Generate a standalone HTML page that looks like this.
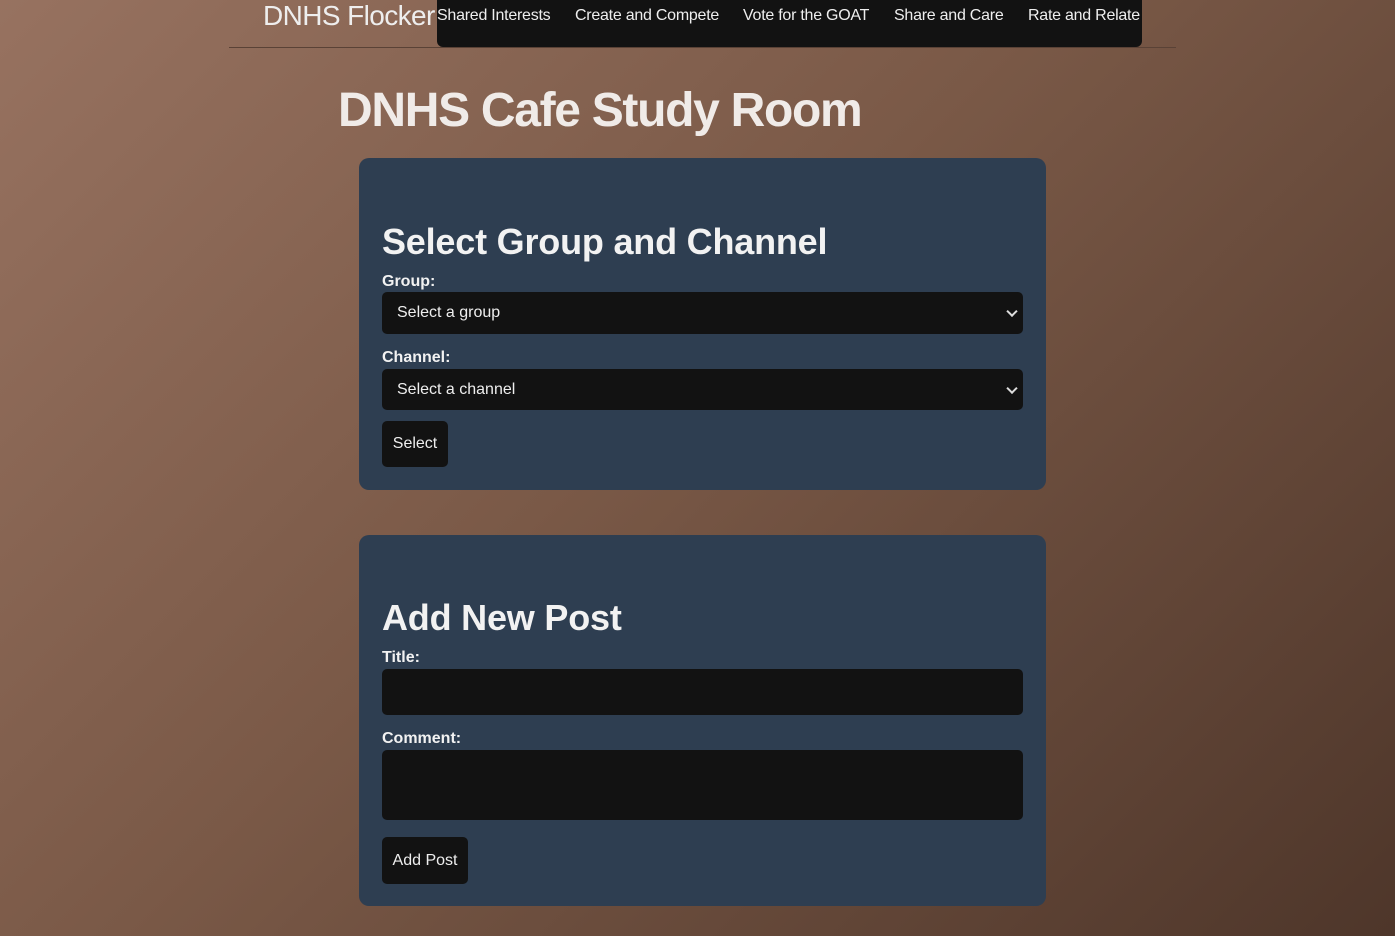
<!DOCTYPE html>
<html><head><style>
*{box-sizing:border-box;margin:0;padding:0}
body{width:1395px;height:936px;overflow:hidden;font-family:"Liberation Sans",Arial,sans-serif;background:linear-gradient(135deg,#977260 0%,#7a5947 45%,#4e362a 100%);color:#eee;position:relative}
.a{position:absolute}
.logo{left:263px;top:0;font-size:28px;color:#eee;letter-spacing:-0.6px;line-height:32px}
.nav{left:437px;top:0;width:705px;height:47px;background:#121212;border-radius:0 0 6px 6px}
.nav span{position:absolute;top:7px;font-size:16px;color:#eee;letter-spacing:-0.25px}
.hr{left:229px;top:47px;width:947px;height:1px;background:#5a4236}
h1{position:absolute;left:338px;top:83px;font-size:48px;font-weight:bold;color:#f0ebe8;letter-spacing:-1.3px}
.card{background:#2e3e51;border-radius:10px;width:687px;left:359px}
h2{position:absolute;left:382px;font-size:36px;font-weight:bold;color:#f2f2f2;letter-spacing:-0.2px}
.lbl{left:382px;font-size:16px;font-weight:bold;color:#f2f2f2}
.box{left:382px;width:641px;background:#121212;border-radius:5px;font-size:16px;color:#eee;padding-left:15px}
.chev{position:absolute;right:7px;top:50%;width:8px;height:8px;border-right:2px solid #ddd;border-bottom:2px solid #ddd;transform:translateY(-70%) rotate(45deg)}
.btn{left:382px;background:#121212;border-radius:5px;font-size:16px;color:#eee;text-align:center}
</style></head><body>
<div class="a logo">DNHS Flocker</div>
<div class="a nav">
<span style="left:0">Shared Interests</span>
<span style="left:138px">Create and Compete</span>
<span style="left:306px">Vote for the GOAT</span>
<span style="left:457px">Share and Care</span>
<span style="left:591px">Rate and Relate</span>
</div>
<div class="a hr"></div>
<h1>DNHS Cafe Study Room</h1>

<div class="a card" style="top:158px;height:332px"></div>
<h2 style="top:221px">Select Group and Channel</h2>
<div class="a lbl" style="top:273px">Group:</div>
<div class="a box" style="top:292px;height:42px;line-height:42px">Select a group<div class="chev"></div></div>
<div class="a lbl" style="top:349px">Channel:</div>
<div class="a box" style="top:369px;height:41px;line-height:41px">Select a channel<div class="chev"></div></div>
<div class="a btn" style="top:421px;width:66px;height:46px;line-height:46px">Select</div>

<div class="a card" style="top:535px;height:371px"></div>
<h2 style="top:597px">Add New Post</h2>
<div class="a lbl" style="top:649px">Title:</div>
<div class="a box" style="top:669px;height:46px"></div>
<div class="a lbl" style="top:730px">Comment:</div>
<div class="a box" style="top:750px;height:70px"></div>
<div class="a btn" style="top:837px;width:86px;height:47px;line-height:47px">Add Post</div>
</body></html>
